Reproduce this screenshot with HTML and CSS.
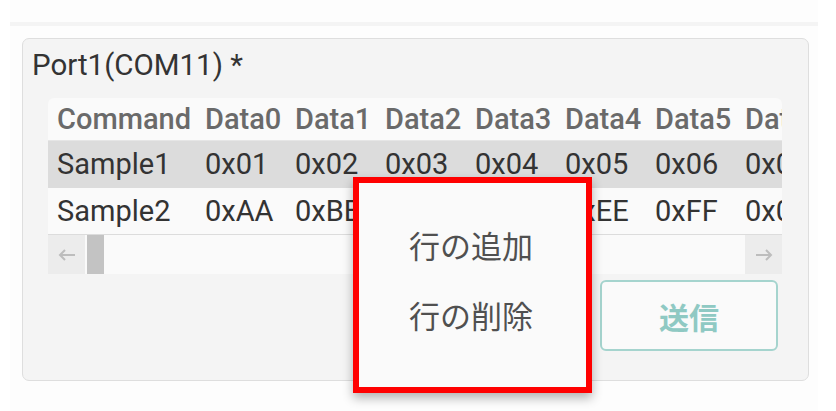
FILE: index.html
```html
<!DOCTYPE html>
<html lang="ja">
<head>
<meta charset="utf-8">
<title>Port1</title>
<link rel="stylesheet" href="styles.css">
</head>
<body>
<div class="page">
  <div class="topbar"></div>
  <section class="card">
    <h2 class="card-title">Port1(COM11) *</h2>
    <div class="grid">
      <div class="grid-body">
        <table class="cmd-table">
          <colgroup>
            <col class="c-cmd"><col class="c-data"><col class="c-data"><col class="c-data"><col class="c-data"><col class="c-data"><col class="c-data"><col class="c-data"><col class="c-data">
          </colgroup>
          <thead>
            <tr><th>Command</th><th>Data0</th><th>Data1</th><th>Data2</th><th>Data3</th><th>Data4</th><th>Data5</th><th>Data6</th><th>Data7</th></tr>
          </thead>
          <tbody>
            <tr class="selected"><td>Sample1</td><td>0x01</td><td>0x02</td><td>0x03</td><td>0x04</td><td>0x05</td><td>0x06</td><td>0x07</td><td>0x08</td></tr>
            <tr><td>Sample2</td><td>0xAA</td><td>0xBB</td><td>0xCC</td><td>0xDD</td><td>0xEE</td><td>0xFF</td><td>0x00</td><td>0x11</td></tr>
          </tbody>
        </table>
      </div>
      <div class="hscroll">
        <div class="hs-btn">
          <svg width="18" height="12" viewBox="0 0 18 12"><path d="M17 6H2M7 1L2 6l5 5" fill="none" stroke="#bdbdbd" stroke-width="2"/></svg>
        </div>
        <div class="hs-track"><div class="hs-thumb"></div></div>
        <div class="hs-btn">
          <svg width="18" height="12" viewBox="0 0 18 12"><path d="M1 6h15M11 1l5 5-5 5" fill="none" stroke="#bdbdbd" stroke-width="2"/></svg>
        </div>
      </div>
    </div>
    <div class="actions">
      <button class="send-btn" type="button">送信</button>
    </div>
  </section>

  <div class="context-menu">
    <div class="menu-item">行の追加</div>
    <div class="menu-item">行の削除</div>
  </div>
</div>
</body>
</html>
```

FILE: styles.css
```css
* { box-sizing: border-box; }

html, body {
  margin: 0;
  padding: 0;
  background: #ffffff;
  font-family: Roboto, "Noto Sans CJK JP", sans-serif;
}

.page {
  position: relative;
  width: 808px;
  height: 411px;
  margin-left: 10px;
  padding-top: 22px;
  background: #fdfdfd;
}

.topbar {
  height: 4px;
  background: #f4f4f4;
}

.card {
  margin: 12px 9px 0 12px;
  height: 343px;
  border: 1px solid #dedede;
  border-radius: 7px;
  background: #f4f4f4;
  padding: 8px 26px 0 25px;
  display: flex;
  flex-direction: column;
}

.card-title {
  margin: 0 0 15px -16px;
  font-size: 29.5px;
  line-height: 36px;
  font-weight: 400;
  color: #333333;
}

.grid {
  width: 734px;
  background: #fafafa;
  border-radius: 6px 6px 0 0;
  overflow: hidden;
}

.grid-body {
  overflow: hidden;
}

.cmd-table {
  border-collapse: collapse;
  table-layout: fixed;
  width: 868px;
  font-size: 29px;
}

.c-cmd { width: 148px; }
.c-data { width: 90px; }

.cmd-table th,
.cmd-table td {
  padding: 0 0 0 9px;
  text-align: left;
  white-space: nowrap;
  overflow: hidden;
}

.cmd-table th {
  height: 42px;
  line-height: 42px;
  font-weight: 500;
  color: #6a6a6a;
  border-bottom: 1px solid #e6e6e6;
}

.cmd-table td {
  height: 47px;
  line-height: 46px;
  font-weight: 400;
  color: #333333;
}

.cmd-table tbody tr:last-child td {
  border-bottom: 1px solid #dcdcdc;
}

.cmd-table tr.selected td {
  background: #dcdcdc;
}

.hscroll {
  display: flex;
  height: 39px;
  background: #fafafa;
}

.hs-btn {
  width: 37px;
  flex: none;
  background: #ececec;
  display: flex;
  align-items: center;
  justify-content: center;
}

.hs-track {
  flex: 1;
  padding-left: 2px;
}

.hs-thumb {
  width: 17px;
  height: 100%;
  background: #c3c3c3;
}

.actions {
  display: flex;
  justify-content: flex-end;
  padding: 6px 4px 0 0;
}

.send-btn {
  width: 178px;
  height: 71px;
  border: 2px solid #a5d4ce;
  border-radius: 6px;
  background: #fafafa;
  color: #8fc9c3;
  font-family: "Noto Sans CJK JP", sans-serif;
  font-size: 30px;
  font-weight: 700;
  padding: 0;
}

.context-menu {
  position: absolute;
  left: 343px;
  top: 177px;
  width: 239px;
  height: 216px;
  border: 6px solid #ff0000;
  background: #fafafa;
  box-shadow: 0 5px 10px rgba(0, 0, 0, 0.3);
  padding-top: 27px;
}

.menu-item {
  height: 70px;
  line-height: 70px;
  text-align: center;
  font-family: "Noto Sans CJK JP", sans-serif;
  font-size: 31px;
  font-weight: 400;
  color: #505050;
  padding-right: 3px;
}
```
